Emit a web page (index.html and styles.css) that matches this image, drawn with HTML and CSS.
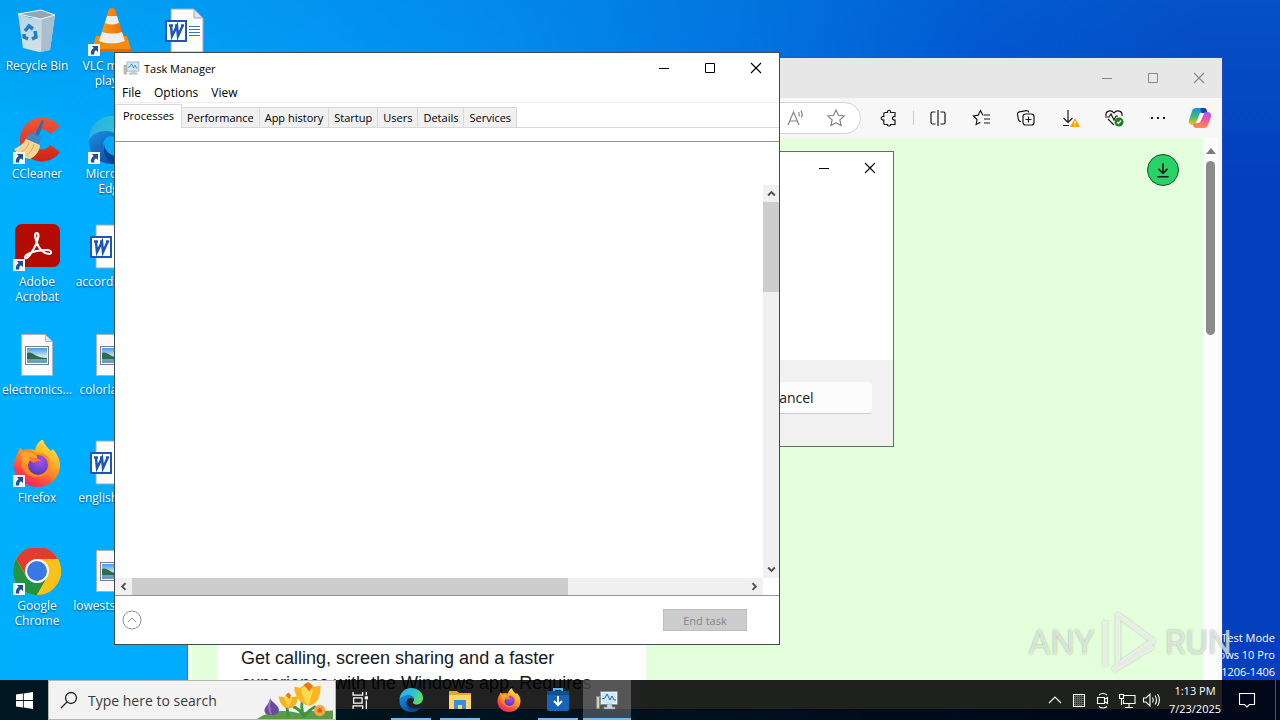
FILE: index.html
```html
<!DOCTYPE html>
<html lang="en">
<head>
  <meta charset="UTF-8" />
  <meta name="viewport" content="width=device-width, initial-scale=1.0"/>
  <title>Desktop</title>
  <link rel="stylesheet" href="styles.css">
</head>
<body>
  <!-- shared icons -->
  <svg class="sprite" aria-hidden="true">
    <defs>
      <linearGradient id="edge-a" x1="0" y1="0" x2="1" y2="0.4"><stop offset="0" stop-color="#2aa9e8"/><stop offset="0.6" stop-color="#2fc2d4"/><stop offset="1" stop-color="#5bdc6a"/></linearGradient>
      <linearGradient id="edge-b" x1="0" y1="0" x2="0.6" y2="1"><stop offset="0" stop-color="#1c8fe0"/><stop offset="1" stop-color="#0d4fa8"/></linearGradient>
      <linearGradient id="fox-a" x1="0.8" y1="0" x2="0.2" y2="1"><stop offset="0" stop-color="#fff04a"/><stop offset="0.45" stop-color="#ff9a1e"/><stop offset="0.8" stop-color="#ff3b4a"/><stop offset="1" stop-color="#e4207a"/></linearGradient>
      <radialGradient id="fox-b" cx="0.6" cy="0.3" r="0.8"><stop offset="0" stop-color="#a452f0"/><stop offset="1" stop-color="#4a36b8"/></radialGradient>
      <linearGradient id="sky" x1="0" y1="0" x2="0" y2="1"><stop offset="0" stop-color="#4b9be0"/><stop offset="0.6" stop-color="#d8ecf8"/></linearGradient>
      <linearGradient id="bin" x1="0" y1="0" x2="0" y2="1"><stop offset="0" stop-color="#c3d8e6"/><stop offset="1" stop-color="#dfe3e4"/></linearGradient>
      <linearGradient id="cone" x1="0" y1="0" x2="1" y2="0"><stop offset="0" stop-color="#ff9b1c"/><stop offset="1" stop-color="#e86a00"/></linearGradient>
      <linearGradient id="cc" x1="0" y1="0" x2="0" y2="1"><stop offset="0" stop-color="#f0573a"/><stop offset="1" stop-color="#cf2414"/></linearGradient>
      <linearGradient id="pilot-a" x1="0" y1="0" x2="0" y2="1"><stop offset="0" stop-color="#1b8fe8"/><stop offset="0.5" stop-color="#3fb978"/><stop offset="1" stop-color="#f2c61c"/></linearGradient>
      <linearGradient id="pilot-b" x1="0" y1="0" x2="0" y2="1"><stop offset="0" stop-color="#a45cf0"/><stop offset="0.5" stop-color="#f0589a"/><stop offset="1" stop-color="#ff8f4a"/></linearGradient>
    </defs>
    <symbol id="shortcut" viewBox="0 0 12 12">
      <rect width="12" height="12" fill="#f6f8fb"/>
      <path d="M4 2h6v6L8 6.200C6.300 7.200 6 8.600 6.300 10.500H3C2.500 7.500 3.500 5.500 5.700 4z" fill="#1f4f94"/>
    </symbol>
    <symbol id="word" viewBox="0 0 48 48">
      <path d="M8 1h23l9 9v34H8z" fill="#fdfdfd" stroke="#9aa7b5"/>
      <path d="M31 1v9h9z" fill="#dfe4ea" stroke="#9aa7b5"/>
      <path d="M26 18.500h11M26 21.500h11M26 24.500h11M26 27.500h11" stroke="#3a73c4"/>
      <rect x="3" y="13" width="20" height="20" fill="#fff" stroke="#1d55b8" stroke-width="2"/>
      <path d="M6 17.500h4M12 17.500h3M18 17.500h3M8 18l1 10L14 18l1 10 4.500-10" fill="none" stroke="#1d55b8" stroke-width="2.500"/>
    </symbol>
    <symbol id="picture" viewBox="0 0 48 48">
      <path d="M8.500 2.500h24l7 7v34h-31z" fill="#fafafa" stroke="#a9b3bc"/>
      <path d="M32.500 2.500v7h7z" fill="#dfe4ea" stroke="#a9b3bc"/>
      <rect x="12.500" y="14.500" width="23" height="18" fill="#fff" stroke="#6f8190"/>
      <rect x="14" y="16" width="20" height="15" fill="url(#sky)"/>
      <path d="M14 21c3-1 5 0 8 2s8 3 12 3v2H14z" fill="#2f6a4a"/>
      <path d="M14 27h20v4H14z" fill="#6d9fb8"/>
    </symbol>
    <symbol id="edge" viewBox="0 0 48 48">
      <path d="M1 24C1 10 11 0 24 0c14 0 24 9 24 20 0 8-6 13-13 13-5 0-7-2-7-4s2-3 2-6c0-4-4-8-10-8C12 15 4 18 1 24z" fill="url(#edge-a)"/>
      <path d="M1 24c3-6 10-9 17-9 6 0 11 3 12 8-2-2-5-3-7-3-5 0-8 5-8 10 0 9 8 15 18 17-3 1-6 1-9 1C10 48 0 37 1 24z" fill="url(#edge-b)"/>
      <path d="M16 27c0 9 9 14 17 14 5 0 8-1 11-4-4 7-10 11-16 11-9-2-14-10-12-21z" fill="#0b4390"/>
    </symbol>
    <symbol id="firefox" viewBox="0 0 48 48">
      <path d="M5 14c0-2 1-3 2-5l4 3c3-2 7-2 11-1 1-5 4-9 8-11 0 4 4 8 8 12l2-2c4 5 7 10 7 16 0 13-10 22-23 22S1 38 1 27c0-5 1-9 4-13z" fill="url(#fox-a)"/>
      <path d="M8 12c6-3 12-1 16 3 8-2 14 4 13 12-1 7-6 11-13 11-9 0-15-6-16-14z" fill="#ff8a1e"/>
      <circle cx="25" cy="26" r="10" fill="url(#fox-b)"/>
      <path d="M8 14c5-2 11-1 16 3 1 2-1 3-4 3-3 1-5 3-5 6-5-3-8-7-7-12z" fill="#ffa52c"/>
      <path d="M16 18c5 1 8 0 12 4-3 0-5 0-7 2-3-1-5-3-5-6z" fill="#ff7a28"/>
    </symbol>
    <symbol id="taskmgr" viewBox="0 0 24 20">
      <path d="M1.500 6.500h3v12h-3z" fill="#d7cfae" stroke="#8b8b7d"/>
      <path d="M5.500 1.500h17v13h-17z" fill="#eef4f8" stroke="#7d93a3"/>
      <path d="M7 3h14v10H7z" fill="#cfe8f7"/>
      <path d="M7 9l3-1 2-4 3 6 2-4 2 4h2" fill="none" stroke="#1b6fae"/>
      <path d="M12 14h5v3h3v2H9v-2h3z" fill="#c9d4dc" stroke="#7d93a3" stroke-width="0.500"/>
    </symbol>
    <symbol id="min" viewBox="0 0 12 12"><path d="M1 6.500h10" stroke="currentColor"/></symbol>
    <symbol id="max" viewBox="0 0 12 12"><path d="M1.500 1.500h9v9h-9z" fill="none" stroke="currentColor"/></symbol>
    <symbol id="close" viewBox="0 0 12 12"><path d="M1 1l10 10M11 1L1 11" stroke="currentColor" stroke-width="1.100"/></symbol>
    <symbol id="arrow" viewBox="0 0 8 8"><path d="M1 5.800L4 2.800l3 3" fill="none" stroke="#505050" stroke-width="1.700"/></symbol>
  </svg>

  <main class="desktop">
    <div class="icons">
      <button class="icon">
        <svg viewBox="0 0 48 48">
          <path d="M5 6l13 4 24-3-5 35-11 2-16-4z" fill="url(#bin)" opacity="0.950"/>
          <path d="M29 10l13-3-5 35-9 2z" fill="#a9bfcd"/>
          <path d="M5 6l23-4 14 5-14 4z" fill="#8fa8b8" stroke="#eef5f9"/>
          <path d="M12 23l4-5 4 3M22 23l1 6-4 2M15 31l-4-2v-3" fill="none" stroke="#1c7fce" stroke-width="3.500"/>
        </svg>
        <span>Recycle Bin</span>
      </button>
      <button class="icon">
        <svg viewBox="0 0 48 48">
          <path d="M8 28h31l5 16H3z" fill="#f58a0c"/>
          <path d="M3 41h41v3H3z" fill="#d96e00"/>
          <path d="M21 1q3-2 6 0l10 32q-13 5-26 0z" fill="url(#cone)"/>
          <path d="M19 8h10l2 7q-7 3-14 0zM14 24q10 3 20 0l3 9q-13 5-26 0z" fill="#eceeef"/>
          <use href="#shortcut" y="36" width="12" height="12"/>
        </svg>
        <span>VLC media player</span>
      </button>
      <button class="icon" aria-label="Document"><svg><use href="#word"/></svg></button>
      <button class="icon">
        <svg viewBox="0 0 48 48">
          <path d="M47 11A22 22 0 1 0 47 36l-10-7a10 10 0 1 1 0-11z" fill="url(#cc)"/>
          <path d="M29 4l2 1-6 17-4-2z" fill="#2d6fae"/>
          <path d="M17 17l11 4-2 8-14-5z" fill="#3d87c4"/>
          <path d="M13 23l14 6c0 6-5 12-10 14C10 42 4 38 1 33c5-2 9-5 12-10z" fill="#f6d491"/>
          <path d="M16 26c-1 5-5 9-9 11M21 28c-1 5-4 9-8 12" stroke="#dca95a" fill="none"/>
          <use href="#shortcut" y="36" width="12" height="12"/>
        </svg>
        <span>CCleaner</span>
      </button>
      <button class="icon"><svg viewBox="0 0 48 48"><use href="#edge" width="48" height="48"/><use href="#shortcut" y="36" width="12" height="12"/></svg><span>Microsoft Edge</span></button>
      <button class="icon row-3">
        <svg viewBox="0 0 48 48">
          <rect x="2" width="45" height="43" rx="7" fill="#b30b00"/>
          <path d="M24 9c-3 0-2 5 0 10 2 6 7 11 12 11 3 0 3-4-2-4-7 0-15 2-19 4-5 3-3 6 0 3 4-4 9-13 10-19 1-3 0-5-1-5z" fill="none" stroke="#fff" stroke-width="2.200"/>
          <use href="#shortcut" y="35" width="12" height="12"/>
        </svg>
        <span>Adobe Acrobat</span>
      </button>
      <button class="icon"><svg><use href="#word"/></svg><span>accordfire.rtf</span></button>
      <button class="icon row-4"><svg><use href="#picture"/></svg><span>electronics...</span></button>
      <button class="icon"><svg><use href="#picture"/></svg><span>colorlab.jpg</span></button>
      <button class="icon row-5"><svg viewBox="0 0 48 48"><use href="#firefox" width="48" height="48" y="-1"/><use href="#shortcut" y="35" width="12" height="12"/></svg><span>Firefox</span></button>
      <button class="icon"><svg><use href="#word"/></svg><span>englishrea...</span></button>
      <button class="icon row-6">
        <svg viewBox="0 0 48 48">
          <circle cx="24" cy="23" r="24" fill="#fbc116"/>
          <path d="M3.200 11A24 24 0 0 1 44.800 11H24L14 29z" fill="#e33b2e"/>
          <path d="M3.200 11l10.400 18L24 35l-1 12A24 24 0 0 1 3.200 11z" fill="#229342"/>
          <path d="M24 35l10.400-6L24 47h-3z" fill="#229342"/>
          <path d="M34.400 29L24 47a24 24 0 0 0 20.800-36H24z" fill="#fbc116"/>
          <circle cx="24" cy="23" r="12" fill="#fff"/>
          <circle cx="24" cy="23" r="10" fill="#3a78e8"/>
          <use href="#shortcut" y="35" width="12" height="12"/>
        </svg>
        <span>Google Chrome</span>
      </button>
      <button class="icon"><svg><use href="#picture"/></svg><span>lowestsouth...</span></button>
    </div>

    <p class="build">Test Mode<br>Windows 10 Pro<br>Build 19041.vb_release.191206-1406</p>

    <section class="window browser" aria-label="Browser">
      <header class="caption">
        <button aria-label="Minimize"><svg><use href="#min"/></svg></button>
        <button aria-label="Maximize"><svg><use href="#max"/></svg></button>
        <button aria-label="Close"><svg><use href="#close"/></svg></button>
      </header>
      <div class="toolbar">
        <div class="address">
          <button aria-label="Read aloud"><svg viewBox="0 0 20 20"><path d="M2 17L7.500 4 13 17M4 13h7M12.500 4c1 1.500 1 3 .5 4.500M15 2.500c1.500 2.500 1.500 5 .5 7"/></svg></button>
          <button aria-label="Add to favorites"><svg viewBox="0 0 20 20"><path d="M10 2l2.400 5.300 5.800.7-4.300 3.900 1.200 5.700L10 14.700l-5.100 2.900 1.200-5.700L1.800 8l5.800-.7z"/></svg></button>
        </div>
        <button aria-label="Extensions"><svg viewBox="0 0 20 20"><path d="M6 4.500h2.500c-.8-3 3.800-3 3 0H16v4c-3.500-.5-3.500 4 0 3.500v4.500h-4.500c.8 2-3.800 2-3 0H6c-.8 0-1.200-.5-1.200-1.200V12c-3.500.5-3.500-4 0-3.500V5.700c0-.7.4-1.200 1.200-1.200z"/></svg></button>
        <span class="divider"></span>
        <button aria-label="Split screen"><svg viewBox="0 0 20 20"><path d="M10 2v16M7.500 4H4.500c-.8 0-1.500.7-1.500 1.500v9c0 .8.700 1.500 1.500 1.500h3M12.500 4h3c.8 0 1.500.7 1.500 1.500v9c0 .8-.7 1.500-1.500 1.500h-3"/></svg></button>
        <button aria-label="Favorites"><svg viewBox="0 0 20 20"><path d="M11.500 7h-.7L8.500 2.500 6.200 7.200l-4.700.8 3.500 3.500-.8 5 4.300-2.300M12 7h6M12 11h6M12 15h6"/></svg></button>
        <button aria-label="Collections"><svg viewBox="0 0 20 20"><path d="M5 13.500c-1.500 0-2.300-.8-2.600-2.200l-.9-4.800c-.2-1.300.5-2.300 1.800-2.600l7-1.300c1.200-.2 2.200.5 2.500 1.900M7 8.500C7 7.200 7.900 6 9.500 6h6c1.500 0 2.500 1 2.500 2.500v6c0 1.500-1 2.500-2.500 2.500h-6C8 17 7 16 7 14.500zM12.500 8.500v6M9.500 11.500h6"/></svg></button>
        <button aria-label="Downloads"><svg viewBox="0 0 20 20"><path d="M8 2v12M3.500 10L8 14.500l4.500-4.500M3 17.500h6"/><path class="solid" d="M15 10l5 9H10z" fill="#ff9d1c"/><path d="M15 13v3M15 17v1" stroke="#fff"/></svg></button>
        <button aria-label="Browser essentials"><svg viewBox="0 0 20 20"><path d="M2 8c-1-5 5-7 8-3 3-4 9-2 8 3M1 9h4l2-3 3 6 2-4h2M4 11l6 6"/><circle class="solid" cx="15" cy="14" r="4.500" fill="#1b7e22"/><path d="M13 14l1.500 1.500L17 12.500" stroke="#fff"/></svg></button>
        <button aria-label="Settings and more"><svg viewBox="0 0 20 20"><path d="M3 10h2M9 10h2M15 10h2" stroke-width="2"/></svg></button>
        <button class="copilot" aria-label="Copilot"><svg viewBox="0 0 24 24"><path class="solid" d="M8 2h8c2 0 3 2 3 4l-6 1-4 9c-1 2-2 3-4 3-3 0-5-2-4-5l3-9c.6-2 2-3 4-3z" fill="url(#pilot-a)"/><path class="solid" d="M13 2h3c2 0 3 2 3.500 5H15c-2 0-3-2-2-5z" fill="#1b3fb8"/><path class="solid" d="M16 22H8c-2 0-3-2-3-4l5-1 4-8c1-2 2-3 5-3 3 0 5 2 4 5l-3 8c-.6 2-2 3-4 3z" fill="url(#pilot-b)"/><path class="solid" d="M12 7l4 .5-4 9-4 .5z" fill="#fff"/></svg></button>
      </div>
      <div class="viewport">
        <div class="page">
          <button class="download" aria-label="Download"><svg viewBox="0 0 16 16"><path d="M8 2v9M4 7l4 4 4-4M3 14h10"/></svg></button>
          <article class="card">Get calling, screen sharing and a faster experience with the Windows app. Requires</article>
        </div>
        <div class="page-scroll">
          <svg viewBox="0 0 10 6"><path d="M5 0l5 6H0z" fill="#7c7c7c"/></svg>
          <div class="thumb"></div>
        </div>
      </div>
    </section>

    <section class="window dialog" aria-label="Dialog">
      <header class="caption">
        <button aria-label="Minimize"><svg><use href="#min"/></svg></button>
        <button aria-label="Close"><svg><use href="#close"/></svg></button>
      </header>
      <footer><button>Cancel</button></footer>
    </section>

    <section class="window manager" aria-label="Task Manager">
      <header class="caption">
        <svg class="app"><use href="#taskmgr"/></svg>
        <h1>Task Manager</h1>
        <button aria-label="Minimize"><svg><use href="#min"/></svg></button>
        <button aria-label="Maximize"><svg><use href="#max"/></svg></button>
        <button aria-label="Close"><svg><use href="#close"/></svg></button>
      </header>
      <nav class="menu">
        <button>File</button>
        <button>Options</button>
        <button>View</button>
      </nav>
      <nav class="tabs">
        <button class="active">Processes</button>
        <button>Performance</button>
        <button>App history</button>
        <button>Startup</button>
        <button>Users</button>
        <button>Details</button>
        <button>Services</button>
      </nav>
      <div class="pane">
        <div class="list"></div>
        <div class="scroll scroll-y">
          <button aria-label="Scroll up"><svg><use href="#arrow"/></svg></button>
          <div class="track"><div class="thumb"></div></div>
          <button class="down" aria-label="Scroll down"><svg><use href="#arrow"/></svg></button>
        </div>
        <div class="scroll scroll-x">
          <button class="left" aria-label="Scroll left"><svg><use href="#arrow"/></svg></button>
          <div class="track"><div class="thumb"></div></div>
          <button class="right" aria-label="Scroll right"><svg><use href="#arrow"/></svg></button>
        </div>
      </div>
      <footer>
        <button class="fewer" aria-label="Fewer details"><svg viewBox="0 0 20 20"><circle cx="10" cy="10" r="9"/><path d="M6 12l4-4 4 4"/></svg></button>
        <button class="end-task" disabled>End task</button>
      </footer>
    </section>

    <div class="watermark">
      <span>ANY</span>
      <svg viewBox="0 0 58 64"><path d="M4 56V11M17 5l35 26-35 24zM12 60l40-24"/></svg>
      <span>RUN</span>
    </div>
  </main>

  <footer class="taskbar">
    <button class="start" aria-label="Start"><svg viewBox="0 0 16 16"><path d="M0 2.300l6.500-.9v6.200H0zM7.300 1.300L16 0v7.600H7.300zM0 8.400h6.500v6.200L0 13.700zM7.300 8.400H16V16l-8.700-1.300z" fill="#fff"/></svg></button>
    <label class="search">
      <svg class="glass" viewBox="0 0 18 18"><circle cx="11" cy="7" r="5.500"/><path d="M7 11l-6 6"/></svg>
      <input type="text" placeholder="Type here to search" aria-label="Search">
      <svg class="flowers" viewBox="0 0 80 40">
        <path d="M0 40c14-10 34-10 44-6 12-4 26-2 36-3v9z" fill="#5c9a4a"/>
        <path d="M33 38c-1-6-2-9-1-14M49 38c-2-8-3-14 0-22M49 38c5-6 9-10 13-11M49 36c-5-7-8-8-11-9" fill="none" stroke="#3c9440" stroke-width="3"/>
        <path d="M14 18c1 5 10 7 9 14-1 5-14 5-15 0-1-5 6-8 6-14z" fill="#6d4aa0"/>
        <path d="M14 20c-2 6-2 10 1 15" stroke="#9878c4" fill="none" stroke-width="2"/>
        <path d="M23 16l6 1 3-3 4 3 7-1c0 7-3 12-9 13-7-1-10-6-11-12z" fill="#f9b21f"/>
        <path d="M28 18l5-5 4 6-4 9z" fill="#ffd34a"/>
        <path d="M30 15l3-3 3 3-2 4z" fill="#e8781a"/>
        <path d="M39 6l7 1 6-5 7 4 8-1c0 12-4 20-12 21-9-1-15-9-16-20z" fill="#fcb51c"/>
        <path d="M47 8l6-4 6 6-5 16c-5-5-7-11-7-18z" fill="#ffd94f"/>
        <path d="M49 4l5-3 5 4-4 6z" fill="#e8781a"/>
        <circle cx="66" cy="31" r="6" fill="#f3a646"/><circle cx="66" cy="31" r="2.500" fill="#d86418"/>
      </svg>
    </label>
    <button class="start" aria-label="Task view"><svg viewBox="0 0 16 16"><path d="M1 0v3h9V0M1 16v-3h9v3M1.500 5.500h8v5h-8zM13.500 0v3M13.500 8v8" fill="none" stroke="#fff" stroke-width="1.200"/><path d="M12 4h3v3h-3z" fill="#fff"/></svg></button>
    <div class="apps">
      <button class="open" aria-label="Edge"><svg><use href="#edge"/></svg></button>
      <button class="open" aria-label="File Explorer"><svg viewBox="0 0 24 24"><path d="M1 3h8l2 2h12v16H1z" fill="#e9a820"/><path d="M1 7h22v14H1z" fill="#ffd766"/><path d="M6 12h12v9h-4v-4h-4v4H6z" fill="#3c8fd4"/></svg></button>
      <button aria-label="Firefox"><svg><use href="#firefox"/></svg></button>
      <button class="open" aria-label="Installer"><svg viewBox="0 0 24 24"><path d="M8 4V1h8v3" fill="none" stroke="#50b8f0" stroke-width="2"/><rect x="1" y="3" width="22" height="20" rx="2" fill="#1665b4"/><path d="M1 3h22v4H1z" fill="#0c4f98"/><path d="M12 8v9M8 13l4 4 4-4" fill="none" stroke="#fff" stroke-width="2"/></svg></button>
      <button class="open current" aria-label="Task Manager"><svg><use href="#taskmgr"/></svg></button>
    </div>
    <div class="tray">
      <button aria-label="Hidden icons"><svg viewBox="0 0 18 18"><path d="M3 12l6-6 6 6"/></svg></button>
      <button aria-label="Touchpad"><svg viewBox="0 0 18 18"><path d="M3.500 3.500h11v12h-11z"/><path d="M5.500 4v11M7.500 4v11M9.500 4v11M11.500 4v11M4 5.500h10M4 7.500h10M4 9.500h10M4 11.500h10M4 13.500h10" stroke-opacity="0.300"/></svg></button>
      <button aria-label="Camera"><svg viewBox="0 0 18 18"><path d="M3.500 6.500h7v6h-7zM10.500 8.500l3-2v6l-3-2M5 4c2-2 6-2 8 0M5 15.500c2 2 6 2 8 0"/></svg></button>
      <button aria-label="Network"><svg viewBox="0 0 18 18"><path d="M6 4.500h11v8H5.500V9M1.500 3.500h4v4h-4zM3.500 8v6M11 13v3M7 16.500h8"/></svg></button>
      <button aria-label="Volume"><svg viewBox="0 0 18 18"><path d="M1.500 7v4H4l4 4V3L4 7zM10.500 6.500c1 1.500 1 3.500 0 5M13 4.500c2 2.500 2 6.500 0 9M15.500 3c2.500 3.500 2.500 8.500 0 12"/></svg></button>
      <time class="clock">1:13 PM<br>7/23/2025</time>
      <button class="notify" aria-label="Notifications"><svg viewBox="0 0 18 18"><path d="M1.500 2.500h15v11h-5L9 16l-2.500-2.500h-5z"/></svg></button>
    </div>
  </footer>
</body>
</html>
```
FILE: styles.css
```css
:root {
  --page: #e4ffdb;
  --frame: #f7f7f7;
  --scroll: #f0f0f0;
  --thumb: #cdcdcd;
}

* {
  box-sizing: border-box;
}

body {
  margin: 0;
  height: 100vh;
  display: grid;
  overflow: hidden;
  font-family: "Open Sans", "Noto Sans", sans-serif;
  font-size: 12px;
  color: #000;
}

button {
  padding: 0;
  border: 0;
  background: none;
  font: inherit;
  color: inherit;
}

.sprite {
  position: absolute;
  width: 0;
  height: 0;
}

.desktop,
.taskbar {
  grid-area: 1 / 1;
}

.desktop {
  position: relative;
  overflow: hidden;
  background:
    linear-gradient(180deg, rgba(8, 120, 215, 0.3), transparent 25%),
    linear-gradient(90deg, #00b0ff 0%, #00aaff 15%, #008ff2 40%, #0070e0 60%, #0050d0 76%, #0440be 94%);
}

/* desktop icons */
.icons {
  display: grid;
  grid-template-columns: repeat(3, 75px);
  grid-auto-rows: 108px;
}

.icon {
  display: flex;
  flex-direction: column;
  align-items: center;
  gap: 2px;
  padding: 8px 2px 0 1px;
  line-height: 15px;
  color: #fff;
  text-shadow: 0 1px 2px rgba(0, 0, 0, 0.6);
}

.icon svg {
  width: 48px;
  height: 48px;
  flex: none;
}

.row-3,
.row-4,
.row-5,
.row-6 {
  grid-column: 1;
}

.build {
  position: absolute;
  right: 5px;
  bottom: 40px;
  margin: 0;
  font-size: 11px;
  line-height: 17px;
  color: #fff;
  text-align: right;
}

/* windows */
.window {
  position: absolute;
  display: flex;
  flex-direction: column;
  background: #fff;
}

.caption {
  display: flex;
  justify-content: flex-end;
  align-items: stretch;
  height: 30px;
  flex: none;
}

.caption button {
  width: 46px;
  display: grid;
  place-items: center;
}

.caption button svg {
  width: 12px;
  height: 12px;
}

.browser {
  inset: 58px 58px 11px 188px;
  background: var(--frame);
  box-shadow: 0 0 1px 1px rgba(60, 80, 160, 0.4);
}

.browser .caption {
  height: 40px;
  background: #e7e7e7;
  color: #888;
}

.toolbar {
  display: flex;
  align-items: center;
  height: 40px;
  padding-right: 2px;
  flex: none;
}

.toolbar button {
  width: 44px;
  height: 32px;
  display: grid;
  place-items: center;
}

.toolbar svg,
.download svg {
  width: 20px;
  height: 20px;
  fill: none;
  stroke: #1a1a1a;
  stroke-width: 1.2;
}

.toolbar .solid {
  stroke: none;
}

.address {
  flex: 1;
  display: flex;
  justify-content: flex-end;
  margin: 0 6px 0 130px;
  padding-right: 4px;
  border: 1px solid #d4d4d4;
  border-radius: 16px;
  background: #fff;
}

.address button {
  width: 40px;
  height: 30px;
}

.address svg {
  stroke: #858585;
}

.divider {
  width: 1px;
  height: 14px;
  margin: 0 2px;
  background: #ccc;
}

.toolbar .copilot {
  width: 40px;
}

.copilot svg {
  width: 24px;
  height: 24px;
}

.viewport {
  flex: 1;
  min-height: 0;
  display: flex;
  margin: 0 4px;
}

.page {
  position: relative;
  flex: 1;
  display: flex;
  align-items: flex-end;
  background: var(--page);
}

.download {
  position: absolute;
  top: 16px;
  right: 24px;
  width: 32px;
  height: 32px;
  display: grid;
  place-items: center;
  border: 1px solid #1d4a2c;
  border-radius: 50%;
  background: #26d366;
}

.download svg {
  width: 18px;
  height: 18px;
  stroke-width: 1.4;
}

.card {
  width: 429px;
  max-width: 100%;
  margin-left: 25px;
  padding: 24px 24px 13px;
  background: #fff;
  font-family: "Liberation Sans", Arial, sans-serif;
  font-size: 18px;
  line-height: 25px;
  color: #16191d;
}

.page-scroll {
  width: 15px;
  padding-top: 10px;
  display: flex;
  flex-direction: column;
  align-items: center;
  gap: 7px;
  background: #fcfcfc;
}

.page-scroll svg {
  width: 10px;
  height: 6px;
}

.page-scroll .thumb {
  width: 9px;
  height: 31%;
  border-radius: 5px;
  background: #8b8b8b;
}

.dialog {
  top: 151px;
  left: 388px;
  width: 506px;
  height: 296px;
  border: 1px solid #5c705c;
}

.dialog .caption {
  height: 32px;
}

.dialog footer {
  display: flex;
  justify-content: flex-end;
  margin-top: auto;
  padding: 22px 21px 32px;
  background: #f1f1f1;
}

.dialog footer button {
  width: 160px;
  height: 32px;
  border-bottom: 1px solid #ccc;
  border-radius: 3px;
  background: #fcfcfc;
  font-size: 14px;
  color: #222;
}

/* task manager */
.manager {
  inset: 52px 500px 75px 114px;
  border: 1px solid #3c4a52;
}

.manager .caption {
  align-items: center;
  padding-left: 8px;
}

.manager .app {
  width: 17px;
  height: 14px;
}

.manager h1 {
  flex: 1;
  margin: 0 0 0 4px;
  font-size: 11px;
  font-weight: 400;
}

.menu {
  display: flex;
  gap: 13px;
  height: 20px;
  padding: 0 7px;
  border-bottom: 1px solid #eee;
}

.tabs {
  display: flex;
  align-items: flex-end;
  height: 25px;
  border-bottom: 1px solid #d9d9d9;
  font-size: 11px;
}

.tabs button {
  height: 20px;
  padding: 0 5px;
  border: solid #d9d9d9;
  border-width: 1px 1px 0 0;
  background: #f0f0f0;
}

.tabs .active {
  height: 24px;
  padding: 0 7px 2px;
  margin-bottom: -1px;
  border-left: 1px solid #d9d9d9;
  background: #fff;
}

.pane {
  flex: 1;
  display: grid;
  grid-template-columns: 1fr 16px;
  grid-template-rows: 1fr 17px;
  margin-top: 13px;
  border: solid #949494;
  border-width: 1px 0;
}

.scroll {
  display: flex;
  background: var(--scroll);
}

.scroll-y {
  flex-direction: column;
  margin-top: 43px;
}

.scroll button {
  width: 17px;
  height: 17px;
  flex: none;
  display: grid;
  place-items: center;
}

.scroll-y button {
  width: 16px;
}

.scroll button svg {
  width: 9px;
  height: 9px;
}

.scroll .track {
  flex: 1;
  display: flex;
}

.scroll-y .thumb {
  width: 100%;
  height: 25%;
}

.scroll-x .thumb {
  width: 71%;
}

.scroll .thumb {
  background: var(--thumb);
}

.down svg {
  transform: rotate(180deg);
}

.left svg {
  transform: rotate(-90deg);
}

.right svg {
  transform: rotate(90deg);
}

.manager footer {
  display: flex;
  justify-content: space-between;
  align-items: center;
  height: 48px;
  padding: 0 32px 0 7px;
}

.fewer svg {
  display: block;
  width: 20px;
  height: 20px;
  fill: none;
  stroke: #8c8c8c;
}

.end-task {
  width: 84px;
  height: 22px;
  border: 1px solid #bfbfbf;
  background: #ccc;
  font-size: 11px;
  color: #838390;
}

/* recorder logo laid over the desktop */
.watermark {
  position: absolute;
  right: 48px;
  bottom: 46px;
  display: flex;
  align-items: center;
  gap: 6px;
  font-family: Roboto, "Liberation Sans", sans-serif;
  font-size: 34px;
  color: rgba(255, 255, 255, 0.65);
  text-shadow: 0 0 2px rgba(90, 110, 90, 0.6);
}

.watermark svg {
  width: 58px;
  height: 64px;
  fill: none;
  stroke: rgba(255, 255, 255, 0.7);
  stroke-width: 5;
  stroke-linejoin: round;
  filter: drop-shadow(0 0 1px rgba(90, 110, 90, 0.6));
}

/* taskbar */
.taskbar {
  position: relative;
  align-self: end;
  display: flex;
  height: 40px;
  background: rgba(0, 0, 0, 0.87);
  color: #fff;
}

.start {
  width: 48px;
  display: grid;
  place-items: center;
}

.start svg {
  width: 17px;
  height: 17px;
}

.search {
  width: 288px;
  display: flex;
  align-items: center;
  padding-left: 11px;
  border: 1px solid #b5b5b5;
  background: #f2f2f2;
}

.glass {
  width: 18px;
  height: 18px;
  flex: none;
  fill: none;
  stroke: #222;
  stroke-width: 1.3;
}

.search input {
  flex: 1;
  min-width: 0;
  padding: 0 0 0 10px;
  border: 0;
  outline: 0;
  background: none;
  font: inherit;
  font-size: 14px;
}

.search input::placeholder {
  color: #3a3a3a;
}

.flowers {
  width: 80px;
  height: 38px;
}

.apps {
  display: flex;
  gap: 1px;
  margin-left: 3px;
}

.apps button {
  position: relative;
  width: 48px;
  display: grid;
  place-items: center;
}

.apps svg {
  width: 24px;
  height: 24px;
}

.open::after {
  content: "";
  position: absolute;
  inset: auto 4px 0;
  height: 2px;
  background: #76b9ed;
}

.apps .current {
  background: rgba(255, 255, 255, 0.24);
}

.current::after {
  inset: auto 0 0;
}

.tray {
  display: flex;
  align-items: center;
  margin-left: auto;
  margin-right: 4px;
  border-right: 1px solid #555;
}

.tray button {
  width: 24px;
  height: 40px;
  display: grid;
  place-items: center;
}

.tray svg {
  width: 18px;
  height: 18px;
  fill: none;
  stroke: #fff;
  stroke-width: 1.1;
}

.clock {
  width: 64px;
  font-size: 11px;
  line-height: 18px;
  text-align: center;
}

.tray .notify {
  width: 40px;
  margin-right: 8px;
}
```
